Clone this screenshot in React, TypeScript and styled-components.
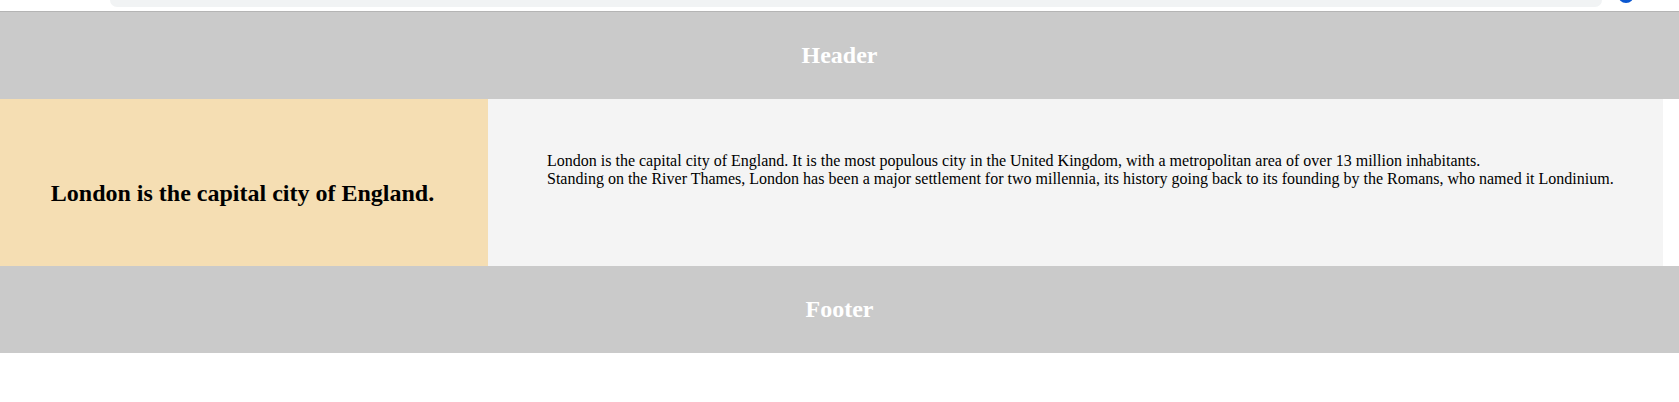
import React from "react";
import styled, { createGlobalStyle } from "styled-components";

const GlobalStyle = createGlobalStyle`
  html, body {
    margin: 0;
    padding: 0;
    background: #ffffff;
    font-family: "Liberation Serif", "Times New Roman", serif;
  }
  * { box-sizing: border-box; }
`;

const Page = styled.div`
  display: flex;
  flex-direction: column;
  width: 1679px;
  min-height: 402px;
  background: #ffffff;
`;

const BrowserStrip = styled.div`
  display: flex;
  align-items: flex-start;
  height: 11px;
  padding-left: 110px;
  overflow: hidden;
`;

const AddressBar = styled.div`
  width: 1492px;
  height: 7px;
  background: #f1f3f4;
  border-radius: 0 0 12px 12px;
`;

const ProfileDot = styled.div`
  width: 16px;
  height: 16px;
  margin-left: 16px;
  margin-top: -13px;
  border-radius: 50%;
  background: #0b57d0;
`;

const Band = styled.div<{ $top?: boolean }>`
  display: flex;
  align-items: center;
  justify-content: center;
  height: ${(p) => (p.$top ? "88px" : "87px")};
  background: #cacaca;
  border-top: ${(p) => (p.$top ? "1px solid #b4b4b4" : "none")};
`;

const BandTitle = styled.h2`
  margin: 0;
  color: #ffffff;
  font-size: 24px;
  font-weight: bold;
  line-height: 27px;
`;

const Middle = styled.div`
  display: flex;
  height: 167px;
`;

const Aside = styled.div`
  width: 488px;
  background: #f5deb3;
  padding: 81px 3px 0 0;
  text-align: center;
`;

const AsideTitle = styled.h2`
  margin: 0;
  color: #000000;
  font-size: 24px;
  font-weight: bold;
  line-height: 27px;
`;

const Article = styled.div`
  width: 1175px;
  background: #f4f4f4;
  padding: 53px 0 0 59px;
`;

const Paragraph = styled.p`
  margin: 0;
  color: #000000;
  font-size: 16px;
  line-height: 17.5px;
`;

export default function App() {
  return (
    <>
      <GlobalStyle />
      <Page>
        <BrowserStrip>
          <AddressBar />
          <ProfileDot />
        </BrowserStrip>
        <Band $top>
          <BandTitle>Header</BandTitle>
        </Band>
        <Middle>
          <Aside>
            <AsideTitle>London is the capital city of England.</AsideTitle>
          </Aside>
          <Article>
            <Paragraph>
              London is the capital city of England. It is the most populous city in the United Kingdom, with a metropolitan area of over 13 million inhabitants.
              <br />
              Standing on the River Thames, London has been a major settlement for two millennia, its history going back to its founding by the Romans, who named it Londinium.
            </Paragraph>
          </Article>
        </Middle>
        <Band>
          <BandTitle>Footer</BandTitle>
        </Band>
      </Page>
    </>
  );
}
